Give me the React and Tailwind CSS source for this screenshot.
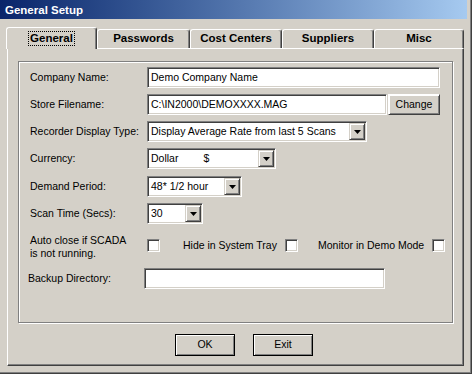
import React from 'react';

const Arrow = () => (
  <svg width="7" height="4" viewBox="0 0 7 4">
    <polygon points="0,0 7,0 3.5,4" fill="#000" />
  </svg>
);

const Sunken = ({ className, children }) => (
  <div className={`${className} h-[21px] flex items-center bg-white border border-t-[#808080] border-l-[#808080] border-r-white border-b-white shadow-[inset_1px_1px_0_#404040,inset_-1px_-1px_0_#d4d0c8] p-[1px]`}>
    {children}
  </div>
);

const Combo = ({ className, children }) => (
  <Sunken className={className}>
    <div className="flex-1 pl-[2px] whitespace-nowrap overflow-hidden">{children}</div>
    <div className="w-[16px] h-[17px] flex items-center justify-center bg-[#d4d0c8] border border-t-[#d4d0c8] border-l-[#d4d0c8] border-r-[#404040] border-b-[#404040] shadow-[inset_1px_1px_0_#fff,inset_-1px_-1px_0_#808080]">
      <Arrow />
    </div>
  </Sunken>
);

const Field = ({ className, value }) => (
  <Sunken className={className}>
    <div className="flex-1 pl-[2px] whitespace-nowrap overflow-hidden">{value}</div>
  </Sunken>
);

const Check = () => (
  <div className="w-[13px] h-[13px] shrink-0 bg-white border border-t-[#808080] border-l-[#808080] border-r-white border-b-white shadow-[inset_1px_1px_0_#404040,inset_-1px_-1px_0_#d4d0c8]" />
);

const Row = ({ label, mt, children }) => (
  <div className={`flex items-center pl-[11px] ${mt}`}>
    <div className="w-[117px]">{label}</div>
    {children}
  </div>
);

const Tab = ({ label, width, active }) =>
  active ? (
    <div className={`relative z-10 -mb-px h-[22px] ${width} flex items-center justify-center pb-[1px] bg-[#d4d0c8] border-l border-t border-r border-l-white border-t-white border-r-[#404040] rounded-t-[3px] shadow-[inset_-1px_0_0_#808080]`}>
      <span className="border border-dotted border-black px-[1px] leading-[13px]">{label}</span>
    </div>
  ) : (
    <div className={`h-[19px] ${width} flex items-center justify-center bg-[#d4d0c8] border-l border-t border-r border-l-white border-t-white border-r-[#404040] rounded-t-[3px] shadow-[inset_-1px_0_0_#808080]`}>
      {label}
    </div>
  );

const Btn = ({ label, className }) => (
  <div className={`${className} flex items-center justify-center bg-[#d4d0c8] border border-black shadow-[inset_1px_1px_0_#fff,inset_-1px_-1px_0_#808080]`}>
    {label}
  </div>
);

export default function App() {
  return (
    <div className="w-[472px] h-[374px] bg-[#d4d0c8] border-r border-b border-[#404040] flex flex-col font-['Liberation_Sans',Arial,sans-serif] text-[10.5px] text-black">
      <div className="flex-1 flex flex-col border-r border-b border-[#808080]">
        {/* Title bar */}
        <div className="h-[19px] mr-[3px] flex items-center pl-[5px] pt-[3px] bg-gradient-to-r from-[#0a246a] to-[#a6caf0] text-white font-bold text-[11.5px]">
          General Setup
        </div>

        {/* Tabs */}
        <div className="flex items-end mt-[8px] pl-[6px] font-bold text-[11.5px]">
          <Tab label="General" width="w-[91px]" active />
          <Tab label="Passwords" width="w-[93px]" />
          <Tab label="Cost Centers" width="w-[92px]" />
          <Tab label="Suppliers" width="w-[92px]" />
          <Tab label="Misc" width="w-[90px]" />
        </div>

        {/* Tab page */}
        <div className="flex-1 ml-[7px] mr-[6px] mb-[6px] flex flex-col border-l border-t border-r border-b border-l-white border-t-white border-r-[#404040] border-b-[#404040] shadow-[inset_-1px_-1px_0_#808080]">
          <div className="ml-[10px] mt-[12px] w-[435px] h-[262px] flex flex-col border border-[#808080] shadow-[inset_1px_1px_0_#fff,1px_1px_0_#fff]">
            <Row label="Company Name:" mt="mt-[5px]">
              <Field className="w-[293px]" value="Demo Company Name" />
            </Row>
            <Row label="Store Filename:" mt="mt-[6px]">
              <Field className="w-[240px]" value="C:\IN2000\DEMOXXXX.MAG" />
              <Btn label="Change" className="ml-[1px] w-[52px] h-[21px] border-t-white border-l-white border-r-[#404040] border-b-[#404040]" />
            </Row>
            <Row label="Recorder Display Type:" mt="mt-[6px]">
              <Combo className="w-[220px]">Display Average Rate from last 5 Scans</Combo>
            </Row>
            <Row label="Currency:" mt="mt-[6px]">
              <Combo className="w-[129px]">
                Dollar<span className="ml-[25px]">$</span>
              </Combo>
            </Row>
            <Row label="Demand Period:" mt="mt-[7px]">
              <Combo className="w-[95px]">48* 1/2 hour</Combo>
            </Row>
            <Row label="Scan Time (Secs):" mt="mt-[6px]">
              <Combo className="w-[56px]">30</Combo>
            </Row>

            <div className="flex items-start pl-[11px] mt-[10px]">
              <div className="w-[117px] leading-[13px]">
                Auto close if SCADA
                <br />
                is not running.
              </div>
              <div className="flex items-center mt-[4px]">
                <Check />
                <div className="ml-[23px] w-[102px]">Hide in System Tray</div>
                <Check />
                <div className="ml-[20px] w-[114px]">Monitor in Demo Mode</div>
                <Check />
              </div>
            </div>

            <div className="flex items-center pl-[9px] mt-[8px]">
              <div className="w-[116px]">Backup Directory:</div>
              <Field className="w-[241px]" value="" />
            </div>
          </div>

          {/* Dialog buttons */}
          <div className="flex mt-[11px] ml-[167px] gap-[18px]">
            <Btn label="OK" className="w-[60px] h-[22px]" />
            <Btn label="Exit" className="w-[60px] h-[22px]" />
          </div>
        </div>
      </div>
    </div>
  );
}
